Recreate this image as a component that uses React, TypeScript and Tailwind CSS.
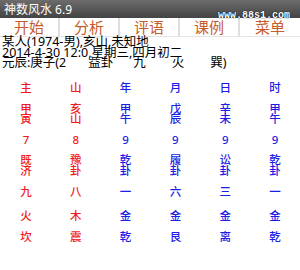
import React from "react";

const RED = "text-[#f01c1c]";
const BLUE = "text-[#1c1ce6]";

type Row = { h: string; cells: string[][] };

// columns: 主, 山, 年, 月, 日, 时
const rows: Row[] = [
  { h: "h-[24px]", cells: [["主"], ["山"], ["年"], ["月"], ["日"], ["时"]] },
  {
    h: "h-[27px]",
    cells: [
      ["甲", "寅"],
      ["亥", "山"],
      ["甲", "午"],
      ["戊", "辰"],
      ["辛", "未"],
      ["甲", "午"],
    ],
  },
  { h: "h-[26px]", cells: [["7"], ["8"], ["9"], ["9"], ["9"], ["9"]] },
  {
    h: "h-[24px]",
    cells: [
      ["既", "济"],
      ["豫", "卦"],
      ["乾", "卦"],
      ["履", "卦"],
      ["讼", "卦"],
      ["乾", "卦"],
    ],
  },
  { h: "h-[29px]", cells: [["九"], ["八"], ["一"], ["六"], ["三"], ["一"]] },
  { h: "h-[20px]", cells: [["火"], ["木"], ["金"], ["金"], ["金"], ["金"]] },
  { h: "h-[21px]", cells: [["坎"], ["震"], ["乾"], ["艮"], ["离"], ["乾"]] },
];

const buttons = ["开始", "分析", "评语", "课例", "菜单"];

export default function App() {
  return (
    <div
      className="relative w-[300px] h-[270px] bg-white overflow-hidden"
      style={{ fontFamily: '"Noto Sans", "Noto Sans CJK SC", sans-serif' }}
    >
      {/* Title bar */}
      <div className="h-[18px] bg-gradient-to-b from-[#6c6c6c] to-[#444444] flex items-end pl-[4px] pb-[1px]">
        <span className="text-white text-[12px] leading-[14px]">神数风水 6.9</span>
      </div>

      {/* watermark */}
      <span
        className="absolute left-[218px] top-[11px] text-white text-[10px] font-bold leading-[10px]"
        style={{ fontFamily: '"Liberation Mono", monospace', textShadow: "0 0 1px #000, 0 0 1px #000" }}
      >
        www.88s1.com
      </span>

      {/* Buttons */}
      <div className="flex h-[19px] border-b border-[#e4e4e4]">
        {buttons.map((b, i) => (
          <div
            key={b}
            className={`w-[60px] flex items-center justify-center text-[15px] leading-[15px] text-[#c65c2c] ${
              i < 4 ? "border-r-2 border-[#dedede]" : ""
            }`}
          >
            {b}
          </div>
        ))}
      </div>

      {/* Info lines */}
      <div className="pl-[2px] text-[12.5px] leading-[10.5px] text-black whitespace-pre">
        <div>某人(1974-男),亥山,未知地</div>
        <div>2014-4-30 12:0,星期三,四月初二</div>
        <div>
          元辰:庚子(2<span className="ml-[22px]">益卦</span>
          <span className="ml-[20px]">九</span>
          <span className="ml-[26px]">火</span>
          <span className="ml-[26px]">巽</span>)
        </div>
      </div>

      {/* Grid */}
      <div className="mt-[8px] pl-[1px]">
        {rows.map((r, ri) => (
          <div key={ri} className={`grid grid-cols-6 ${r.h} items-center`}>
            {r.cells.map((c, ci) => (
              <div
                key={ci}
                className={`flex flex-col items-center text-[11.5px] leading-[10.5px] font-medium ${
                  ci < 2 ? RED : BLUE
                }`}
              >
                {c.map((ch, k) => (
                  <span key={k}>{ch}</span>
                ))}
              </div>
            ))}
          </div>
        ))}
      </div>
    </div>
  );
}
